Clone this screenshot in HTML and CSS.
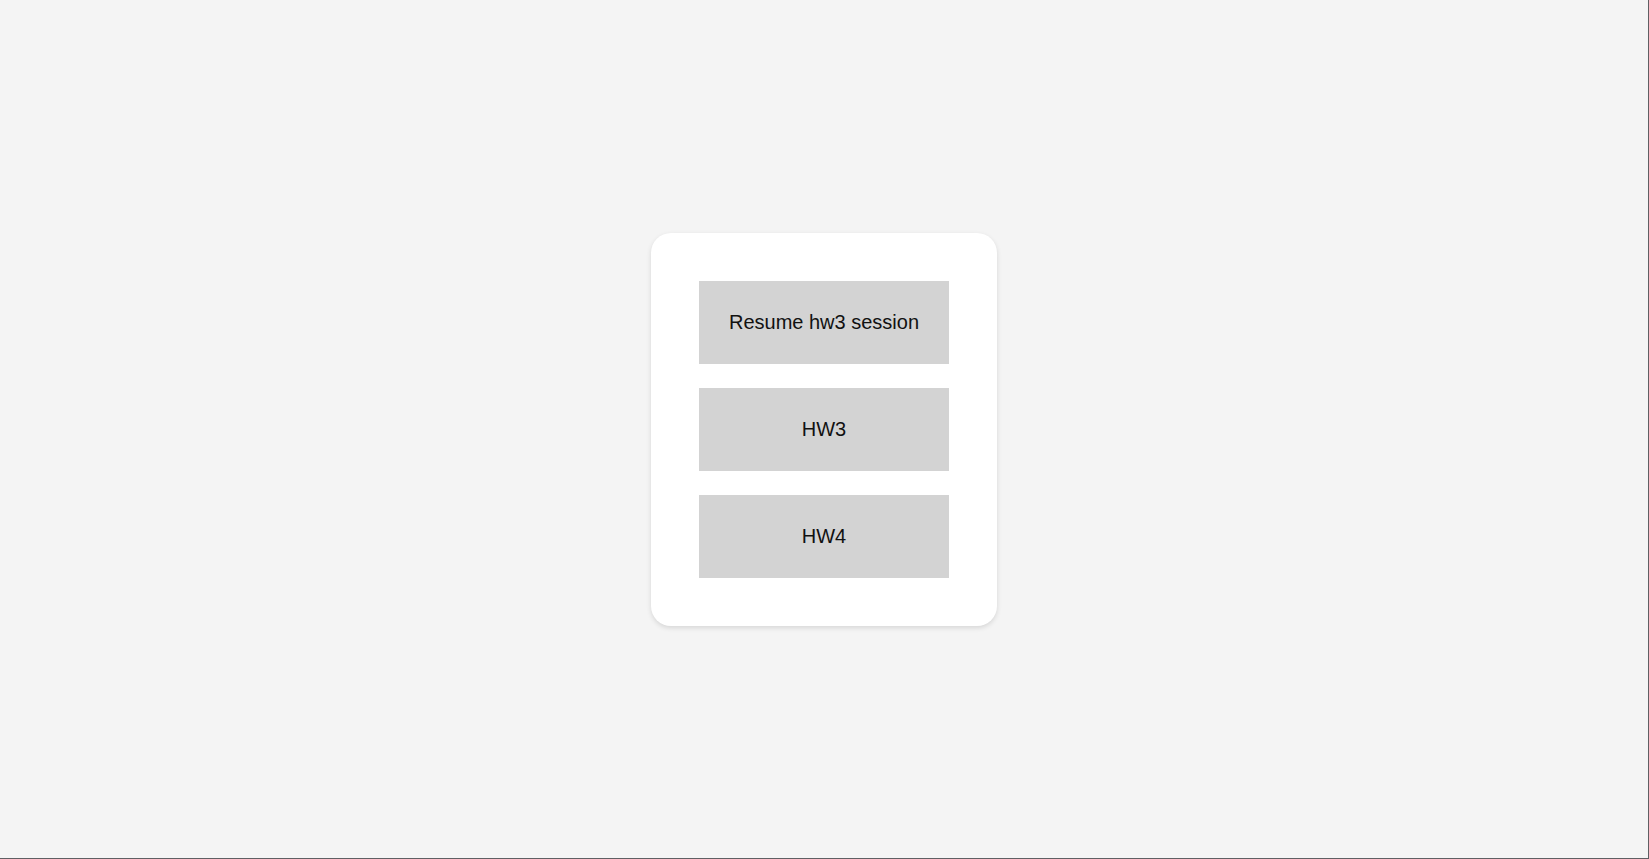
FILE: index.html
```html
<!DOCTYPE html>
<html>
<head>
<meta charset="utf-8">
<link rel="stylesheet" href="styles.css">
</head>
<body>
<div class="page">
  <div class="card">
    <button class="btn">Resume hw3 session</button>
    <button class="btn">HW3</button>
    <button class="btn">HW4</button>
  </div>
</div>
</body>
</html>
```
FILE: styles.css
```css
* { box-sizing: border-box; }
html, body { margin: 0; padding: 0; }
body {
  background: #f4f4f4;
  font-family: "Liberation Sans", Arial, sans-serif;
}
.page {
  width: 100vw;
  height: 100vh;
  display: flex;
  align-items: center;
  justify-content: center;
  border-right: 1px solid #5f5f63;
  border-bottom: 1px solid #5f5f63;
}
.card {
  background: #ffffff;
  border-radius: 20px;
  padding: 48px;
  display: flex;
  flex-direction: column;
  gap: 24px;
  box-shadow: 0 2px 5px rgba(0,0,0,0.12);
}
.btn {
  width: 250px;
  height: 83px;
  background: #d3d3d3;
  border: none;
  border-radius: 0;
  font-family: "Liberation Sans", Arial, sans-serif;
  font-size: 20px;
  color: #111;
  padding: 0;
}
```
